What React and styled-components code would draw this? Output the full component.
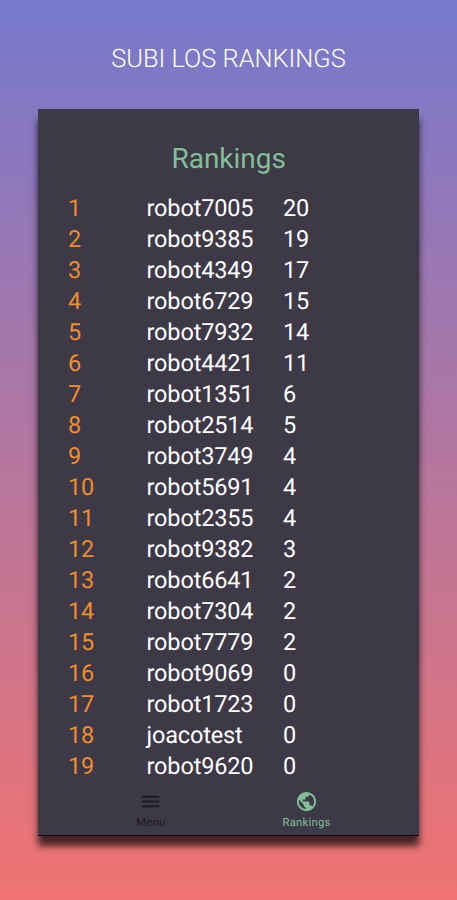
import React from "react";
import styled, { createGlobalStyle } from "styled-components";
import { MdMenu, MdPublic } from "react-icons/md";

const GlobalStyle = createGlobalStyle`
  * { box-sizing: border-box; }
  body {
    margin: 0;
    font-family: Roboto, sans-serif;
    text-rendering: geometricPrecision;
  }
`;

const Page = styled.main`
  height: 900px;
  padding: 41px 38px 0;
  display: flex;
  flex-direction: column;
  overflow: hidden;
  background: linear-gradient(180deg, #7679ce 0%, #f07371 100%);
`;

const Headline = styled.h1`
  margin: 0 0 32px;
  height: 36px;
  line-height: 37px;
  text-align: center;
  font-size: 25.4px;
  font-weight: 300;
  color: #fff;
  white-space: nowrap;
`;

const Screen = styled.section`
  height: 727px;
  width: 381.4px;
  display: flex;
  flex-direction: column;
  background: #3e3947;
  border-bottom: 1px solid #0c0b0f;
  box-shadow: 0 10px 7px rgba(0, 0, 0, 0.7);
`;

const Title = styled.h2`
  margin: 33px 0 17px;
  height: 34px;
  line-height: 34px;
  text-align: center;
  font-size: 28px;
  font-weight: 400;
  color: #81bf97;
`;

const Table = styled.ol`
  list-style: none;
  margin: 0;
  padding: 0 0 0 30px;
`;

const Row = styled.li`
  display: grid;
  grid-template-columns: 78.5px 136.5px 1fr;
  height: 31px;
  line-height: 31px;
  font-size: 23.5px;
  letter-spacing: -0.15px;
  color: #fff;
`;

const Position = styled.span`
  color: #ef8d2c;
`;

const TabBar = styled.nav`
  display: grid;
  grid-template-columns: 1fr 1fr;
  padding: 0 35px;
  margin-top: 8px;
`;

const Tab = styled.div`
  display: flex;
  flex-direction: column;
  align-items: center;
  color: ${(p) => (p.$active ? "#81bf97" : "#1d1a22")};

  svg { width: 23px; height: 23px; }
`;

const TabLabel = styled.span`
  margin-top: 3px;
  font-size: 11.2px;
  line-height: 14px;
  letter-spacing: 0.3px;
`;

const players = [
  ["robot7005", 20], ["robot9385", 19], ["robot4349", 17], ["robot6729", 15],
  ["robot7932", 14], ["robot4421", 11], ["robot1351", 6], ["robot2514", 5],
  ["robot3749", 4], ["robot5691", 4], ["robot2355", 4], ["robot9382", 3],
  ["robot6641", 2], ["robot7304", 2], ["robot7779", 2], ["robot9069", 0],
  ["robot1723", 0], ["joacotest", 0], ["robot9620", 0],
];

export default function App() {
  return (
    <Page>
      <GlobalStyle />
      <Headline>SUBI LOS RANKINGS</Headline>
      <Screen>
        <Title>Rankings</Title>
        <Table>
          {players.map(([name, score], i) => (
            <Row key={name}>
              <Position>{i + 1}</Position>
              <span>{name}</span>
              <span>{score}</span>
            </Row>
          ))}
        </Table>
        <TabBar>
          <Tab>
            <MdMenu />
            <TabLabel>Menu</TabLabel>
          </Tab>
          <Tab $active>
            <MdPublic />
            <TabLabel>Rankings</TabLabel>
          </Tab>
        </TabBar>
      </Screen>
    </Page>
  );
}
